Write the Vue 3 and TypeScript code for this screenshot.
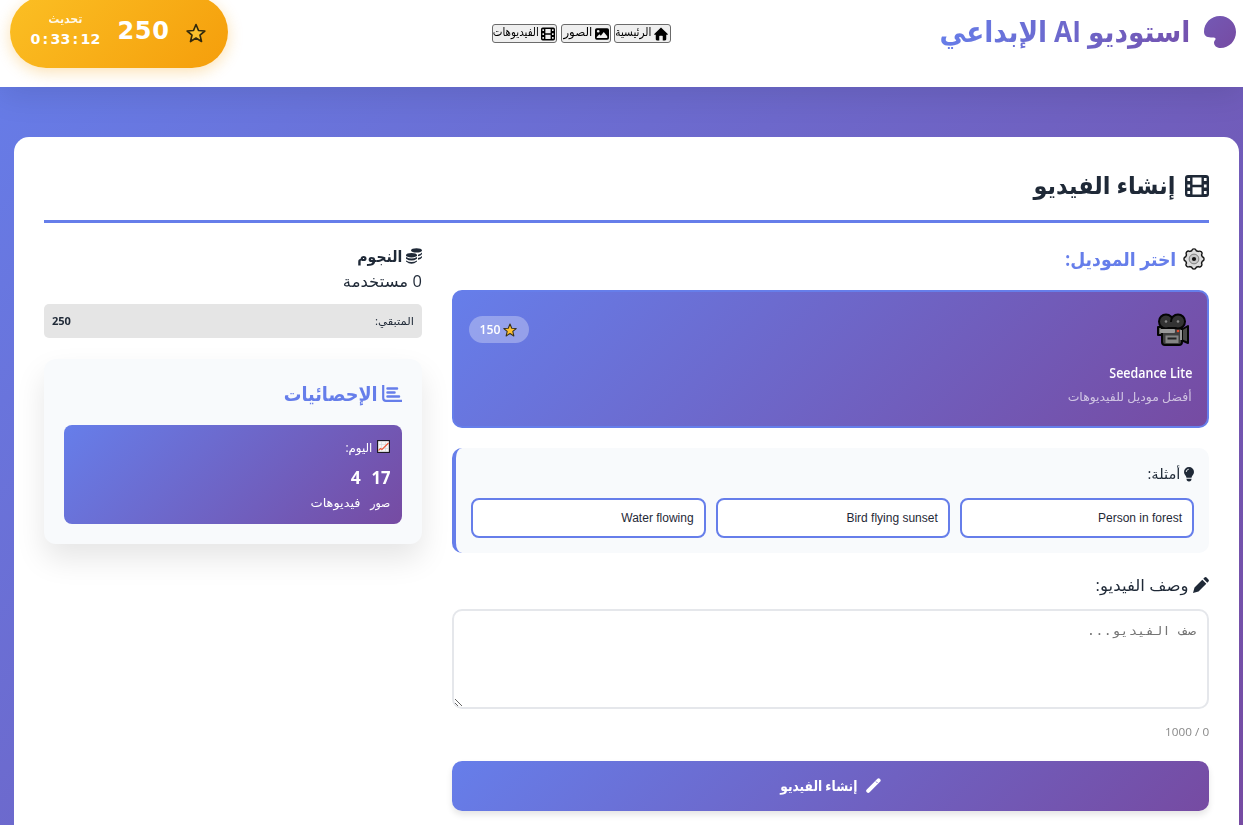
<script setup lang="ts">
import { defineComponent, h, nextTick, onMounted, ref } from 'vue'

// Keeps a label on a fixed measure, whichever Arabic face is available.
const FitText = defineComponent({
  props: { text: { type: String, required: true }, w: { type: Number, required: true } },
  setup(props) {
    const inner = ref<HTMLElement | null>(null)
    const scale = ref(1)
    onMounted(async () => {
      await nextTick()
      if (inner.value && inner.value.offsetWidth) {
        scale.value = props.w / inner.value.getBoundingClientRect().width
      }
    })
    return () =>
      h('span', { class: 'fit', style: { width: `${props.w}px` } }, [
        h('span', { ref: inner, class: 'fit-inner', style: { transform: `scaleX(${scale.value})` } }, props.text),
      ])
  },
})

const filmPath =
  'M3 1H21Q24 1 24 4V20Q24 23 21 23H3Q0 23 0 20V4Q0 1 3 1ZM7.5 3.4V10.8H16.5V3.4ZM7.5 13.2V20.6H16.5V13.2ZM2.4 4V7H5.1V4ZM2.4 10.5V13.5H5.1V10.5ZM2.4 17V20H5.1V17ZM18.9 4V7H21.6V4ZM18.9 10.5V13.5H21.6V10.5ZM18.9 17V20H21.6V17Z'
const starPath = 'M12 1.8L15 9L22.6 9.6L16.8 14.5L18.6 22.2L12 18L5.4 22.2L7.2 14.5L1.4 9.6L9 9Z'

const nav = [
  { label: 'الرئيسية', w: 36, icon: 'home' },
  { label: 'الصور', w: 29, icon: 'image' },
  { label: 'الفيديوهات', w: 46, icon: 'film' },
]
const examples = ['Person in forest', 'Bird flying sunset', 'Water flowing']
const prompt = ref('')
</script>

<template>
  <div class="page" dir="rtl">
    <header class="header">
      <div class="logo">
        <svg class="mark" viewBox="0 0 32 32">
          <defs>
            <linearGradient id="markFill" x1="0" y1="0" x2="1" y2="1">
              <stop offset="0" stop-color="#7459b5" /><stop offset="1" stop-color="#764ba2" />
            </linearGradient>
          </defs>
          <path fill="url(#markFill)" d="M16 0C25 0 32 7 32 16S25 32 16.500 32C12.500 32 10 29.500 10 26.500C10 24.500 12 23.700 11.500 22.400C11 21.300 9.500 21.500 7 21.500C2.500 21.500 0 19.500 0 15.800C0 7 7 0 16 0Z" />
        </svg>
        <FitText class="logo-text" text="استوديو AI الإبداعي" :w="251" />
      </div>
      <nav class="nav">
        <button v-for="n in nav" :key="n.label" :class="['nav-btn', n.icon]">
          <svg class="nav-icon" viewBox="0 0 24 24">
            <path v-if="n.icon === 'home'" d="M12 1L24 12.300Q23.500 13.500 21 13.300V21Q21 23 19 23H15V16Q15 15 14 15H10Q9 15 9 16V23H5Q3 23 3 21V13.300Q.5 13.500 0 12.300Z" />
            <path v-else-if="n.icon === 'image'" fill-rule="evenodd" d="M3 2H21Q24 2 24 5V19Q24 22 21 22H3Q0 22 0 19V5Q0 2 3 2ZM5.500 5A2.300 2.300 0 1 0 5.500 9.600A2.300 2.300 0 1 0 5.500 5ZM3 19H21V16L15 8.500L10 15L7.500 12.500L3 17Z" />
            <path v-else fill-rule="evenodd" :d="filmPath" />
          </svg>
          <FitText :text="n.label" :w="n.w" />
        </button>
      </nav>
      <div class="stars-pill">
        <svg class="pill-star" viewBox="0 0 24 24"><path :d="starPath" fill="#fbc02d" stroke="#33290c" stroke-width="2" stroke-linejoin="round" /></svg>
        <span class="pill-count">250</span>
        <span class="pill-timer">
          <FitText class="pill-label" text="تحديث" :w="34" />
          <span class="pill-time" dir="ltr">0<i>:</i>33<i>:</i>12</span>
        </span>
      </div>
    </header>

    <main class="card">
      <h2 class="title">
        <svg class="title-icon" viewBox="0 1 24 22" preserveAspectRatio="none"><path fill="#1f2937" fill-rule="evenodd" :d="filmPath" /></svg>
        <FitText text="إنشاء الفيديو" :w="142" />
      </h2>
      <div class="columns">
        <section class="main-col">
          <h3 class="section-title">
            <svg class="gear" viewBox="0 0 24 24">
              <path d="M9.500 3Q10 1 12 1T14.500 3L16.500 3.800Q18.500 2.800 20 4.200T20.200 7.500L21 9.500Q23 10 23 12T21 14.500L20.200 16.500Q21.200 18.500 19.800 20T16.500 20.200L14.500 21Q14 23 12 23T9.500 21L7.500 20.200Q5.500 21.200 4 19.800T3.800 16.500L3 14.500Q1 14 1 12T3 9.500L3.800 7.500Q2.800 5.500 4.200 4T7.500 3.800Z" fill="#dedede" stroke="#111" stroke-width="1.500" stroke-linejoin="round" />
              <circle cx="12" cy="12" r="5.300" fill="#c9c9c9" stroke="#777" stroke-width="1" />
              <circle cx="12" cy="12" r="2.300" fill="#111" />
            </svg>
            <FitText text="اختر الموديل:" :w="111" />
          </h3>

          <article class="model">
            <div class="model-info">
              <svg class="camera" viewBox="0 0 32 33">
                <g stroke="#050505" stroke-width="2" stroke-linejoin="round">
                  <path d="M24 17L31 13V30L24 27Z" fill="#4b4b4b" />
                  <rect x="1" y="14" width="5" height="8" fill="#666" />
                  <path d="M5 15H25V29Q25 32 22 32H8Q5 32 5 29Z" fill="#3f3f3f" />
                  <circle cx="9" cy="8.500" r="7" fill="#333" />
                  <circle cx="21" cy="8.500" r="7" fill="#333" />
                </g>
                <path d="M9 9H21V14H9Z" fill="#333" />
                <circle cx="9" cy="8.500" r="1.300" fill="#888" /><circle cx="21" cy="8.500" r="1.300" fill="#888" />
                <rect x="3" y="16" width="15" height="4" rx="1" fill="#999" />
                <circle cx="21" cy="18" r="1.300" fill="#e14b2b" />
                <rect x="8.500" y="22.500" width="13" height="7.500" fill="#858585" />
                <rect x="10.500" y="24.500" width="9" height="2" fill="#222" />
                <path d="M24 17V27" stroke="#999" stroke-width="2" />
              </svg>
              <FitText class="model-name" text="Seedance Lite" :w="83" />
              <FitText class="model-desc" text="أفضل موديل للفيديوهات" :w="124" />
            </div>
            <span class="price">
              <svg class="price-star" viewBox="0 0 24 24"><path :d="starPath" fill="#ffc02e" stroke="#35301f" stroke-width="1.800" stroke-linejoin="round" /></svg>
              <FitText text="150" :w="21" />
            </span>
          </article>

          <div class="examples">
            <div class="examples-title">
              <svg class="bulb" viewBox="0 0 10 15"><path fill="#1f2937" d="M5 0A5 5 0 0 1 10 5C10 7.500 7.800 8.500 7.500 10.800H2.500C2.200 8.500 0 7.500 0 5A5 5 0 0 1 5 0ZM2.500 11.800H7.500Q7.500 14.500 5 14.500Q2.500 14.500 2.500 11.800Z" /><path d="M2.200 5Q2.200 2.500 4.800 2.200" fill="none" stroke="#f8fafc" stroke-width=".9" /></svg>
              <FitText text="أمثلة:" :w="33" />
            </div>
            <div class="example-row">
              <button v-for="e in examples" :key="e" class="example">{{ e }}</button>
            </div>
          </div>

          <label class="prompt-label">
            <svg class="pencil" viewBox="0 0 16 16"><path fill="#1f2937" d="M9.300 2.700L13.300 6.700L5.500 14.500L0 16L1.500 10.500ZM10.300 1.700L11.500.5Q12.500-.4 13.600.6L15.400 2.400Q16.400 3.500 15.500 4.500L14.300 5.700Z" /></svg>
            <FitText text="وصف الفيديو:" :w="93" />
          </label>
          <div class="prompt-box">
            <textarea v-model="prompt" class="prompt" aria-label="وصف الفيديو" />
            <FitText v-if="!prompt" class="placeholder" text="صف الفيديو..." :w="109" />
          </div>
          <div class="counter"><FitText text="0 / 1000" :w="44" /></div>
          <button class="submit">
            <svg class="wand" viewBox="0 0 15 15"><path d="M2.200 12.800L12.600 2.400" stroke="#fff" stroke-width="4" stroke-linecap="round" /><path d="M10 3.500L11.500 5" stroke="#7567ca" stroke-width=".9" /></svg>
            <FitText class="submit-text" text="إنشاء الفيديو" :w="77" />
          </button>
        </section>

        <aside class="side">
          <div class="stars-title">
            <svg class="coins" viewBox="0 0 16 16">
              <g fill="#1f2937"><ellipse cx="10.500" cy="2.400" rx="5.500" ry="2.200" /><ellipse cx="5.500" cy="7.200" rx="5.500" ry="2.300" />
              <path d="M0 9Q5.500 12 11 9V10.700Q5.500 14.500 0 10.700ZM0 12.400Q5.500 15.500 11 12.400V13.500Q5.500 18 0 13.500ZM12 6.700Q15 6 16 4.500V6Q15 7.800 12 8.300ZM12 10Q15 9.300 16 8V9.500Q15 11.300 12 11.700Z" /></g>
            </svg>
            <FitText text="النجوم" :w="45" />
          </div>
          <div class="used"><FitText text="0 مستخدمة" :w="79" /></div>
          <div class="remaining">
            <FitText text="المتبقي:" :w="39" />
            <FitText class="strong" text="250" :w="19" />
          </div>
          <div class="stats">
            <h3 class="stats-title">
              <svg class="chart" viewBox="0 0 20 17"><path d="M1.200 0V13Q1.200 15.800 4 15.800H20" fill="none" stroke="#667eea" stroke-width="2.200" /><path d="M5.500 3.500H15M5.500 7.500H12.500M5.500 11.500H17" fill="none" stroke="#667eea" stroke-width="2.500" stroke-linecap="round" /></svg>
              <FitText text="الإحصائيات" :w="94" />
            </h3>
            <div class="today">
              <div class="today-title">
                <svg class="trend" viewBox="0 0 13 13"><rect x=".6" y=".6" width="11.800" height="11.800" fill="#f7f7f7" stroke="#16131d" stroke-width="1.100" /><path d="M4.500 1.500V11.500M8.500 1.500V11.500M1.500 4.500H11.500M1.500 8.500H11.500" stroke="#cfd6d8" stroke-width=".6" /><path d="M1.500 10.500L3.500 8.500L5 9.500L11.500 3" fill="none" stroke="#ef5b3c" stroke-width="1.100" /></svg>
                <FitText text="اليوم:" :w="27" />
              </div>
              <div class="figures">
                <div class="figure"><b><FitText text="17" :w="19" /></b><FitText text="صور" :w="20" /></div>
                <div class="figure"><b><FitText text="4" :w="10" /></b><FitText text="فيديوهات" :w="50" /></div>
              </div>
            </div>
          </div>
        </aside>
      </div>
    </main>
  </div>
</template>

<style>
html, body { margin: 0; overflow: hidden; }
.fit { display: inline-block; white-space: nowrap; flex: none; }
.fit-inner { display: inline-block; transform-origin: right center; }
</style>

<style scoped>
.page, .page * { box-sizing: border-box; }
.page {
  height: 825px; overflow: hidden;
  background: linear-gradient(135deg, #667eea 0%, #764ba2 100%);
  font-family: "Open Sans", "DejaVu Sans", sans-serif; color: #1f2937;
}
svg { flex: none; display: block; }
button { font-family: inherit; }
.header {
  position: relative; height: 87px; padding: 0 7px 23px 10px; background: #fff;
  box-shadow: 0 8px 32px rgba(0, 0, 0, .1);
  display: flex; align-items: center; justify-content: space-between;
}
.logo { display: flex; align-items: center; gap: 14px; width: 442px; height: 64px; }
.mark { width: 32px; height: 32px; }
.logo-text { font-size: 29px; font-weight: 700; line-height: 48px; height: 48px; margin-top: -2px; }
.logo-text :deep(.fit-inner) {
  background: linear-gradient(100deg, #667eea 0%, #7452ae 100%);
  -webkit-background-clip: text; background-clip: text; color: transparent;
}
.nav { display: flex; gap: 3.500px; flex: 1; height: 19px; padding-right: 123px; margin-top: 3px; }
.nav-btn {
  height: 19px; padding: 0 1px; display: flex; align-items: center; gap: 2px; flex: none;
  border: 1px solid #6b6b6b; border-radius: 3px; background: #efefef; color: #000;
  font: 12px/15px "Liberation Serif", "DejaVu Sans", serif; width: 57px;
}
.nav-btn .fit { margin-top: -2px; }
.nav-btn.image { width: 50px; }
.nav-btn.film { width: 65px; }
.nav-icon { width: 14px; height: 14px; }
.nav-btn.home .nav-icon { width: 16px; }
.stars-pill {
  width: 218px; height: 72px; border-radius: 36px; flex: none; color: #fff;
  display: flex; align-items: center; padding: 0 22px 0 20px; justify-content: space-between;
  background: linear-gradient(135deg, #fbbf24, #f59e0b);
  box-shadow: 0 4px 15px rgba(245, 158, 11, .3);
}
.pill-star { width: 20px; height: 20px; margin-top: 1px; }
.pill-count { font: 700 24px/40px "DejaVu Sans", sans-serif; letter-spacing: .6px; margin-bottom: 2px; }
.pill-timer { width: 71px; display: flex; flex-direction: column; align-items: center; margin-bottom: 4px; }
.pill-label { font-size: 12px; line-height: 18px; font-weight: 600; opacity: .9; }
.pill-time { font: 700 14.200px/22px "DejaVu Sans", sans-serif; letter-spacing: .15px; }
.pill-time i { font-style: normal; margin: 0 2.100px; }

.card { margin: 50px 4px 0 14px; height: 760px; padding: 30px; background: #fff; border-radius: 15px; }
.title {
  height: 56px; margin: 0 0 25px; border-bottom: 3px solid #667eea;
  display: flex; align-items: flex-start; gap: 10px; font-size: 24px; line-height: 36px; font-weight: 700;
}
.title-icon { width: 24px; height: 22px; margin-top: 8px; }
.columns { display: grid; grid-template-columns: 2fr 1fr; gap: 30px; }
.section-title { margin: -5px 0 15px; height: 32px; padding-right: 4px; display: flex; align-items: center; gap: 7px; font-size: 19px; color: #667eea; line-height: 32px; }
.gear { width: 22px; height: 22px; }
.model {
  height: 138px; border: 2px solid #667eea; border-radius: 10px; padding: 15px;
  background: linear-gradient(135deg, #667eea 0%, #764ba2 100%); color: #fff;
  display: flex; justify-content: space-between; align-items: flex-start;
}
.model-info { display: flex; flex-direction: column; align-items: flex-start; padding-top: 6px; }
.camera { width: 32px; height: 33px; margin-right: 3px; }
.model-name { font-size: 14px; font-weight: 600; line-height: 24px; margin-top: 15px; height: 25px; }
.model-desc { font-size: 12px; line-height: 22px; opacity: .65; }
.price { width: 60px; height: 27px; border-radius: 14px; margin-top: 9px; background: rgba(255, 255, 255, .3); display: flex; align-items: center; padding: 0 12px 0 10px; gap: 3px; font-size: 12px; font-weight: 600; }
.price-star { width: 14px; height: 14px; }
.examples { margin-top: 20px; height: 105px; border-left: 4px solid #667eea; border-radius: 10px; background: #f8fafc; padding: 15px; }
.examples-title { height: 25px; margin-bottom: 10px; display: flex; align-items: center; gap: 4px; font-size: 14px; line-height: 24px; }
.examples-title .fit { margin-top: -3px; }
.bulb { width: 10px; height: 15px; margin-top: -3px; }
.example-row { display: grid; grid-template-columns: repeat(3, 1fr); gap: 10px; }
.example { height: 40px; border: 2px solid #667eea; border-radius: 8px; background: #fff; padding: 0 10px; text-align: right; font: 12px "Liberation Sans", Arial, sans-serif; color: #1f2937; }
.prompt-label { margin-top: 20px; height: 26px; display: flex; align-items: center; gap: 4px; font-size: 16px; line-height: 26px; }
.prompt-label .fit { margin-top: -2px; }
.pencil { width: 16px; height: 16px; margin-top: -2px; }
.prompt-box { position: relative; height: 100px; margin-top: 10px; }
.prompt { display: block; width: 100%; height: 100px; margin: 0; padding: 12px; border: 2px solid #e5e7eb; border-radius: 10px; resize: vertical; outline: 0; }
.placeholder { position: absolute; right: 13px; top: 13px; font: 12px/20px "Liberation Mono", "DejaVu Sans Mono", monospace; color: #757575; pointer-events: none; }
.counter { margin-top: 12px; height: 22px; line-height: 22px; font-size: 11.500px; color: #888; }
.submit { margin-top: 18px; width: 100%; height: 50px; border: 0; border-radius: 10px; color: #fff; font-size: 14px; font-weight: 600; display: flex; align-items: center; justify-content: center; gap: 8px; background: linear-gradient(135deg, #667eea 0%, #764ba2 100%); box-shadow: 0 4px 6px rgba(0, 0, 0, .1); }
.submit-text { margin-top: -2px; }
.wand { width: 15px; height: 15px; margin-top: -1px; }

.stars-title { margin-top: -6px; height: 27px; display: flex; align-items: center; gap: 4px; font-size: 16px; font-weight: 700; line-height: 26px; }
.coins { width: 16px; height: 16px; }
.used { height: 26px; line-height: 24px; font-size: 16px; }
.remaining { margin-top: 9px; height: 34px; padding: 0 8px 2px; border-radius: 5px; background: #e5e5e5; display: flex; justify-content: space-between; align-items: center; font-size: 11px; }
.strong { font-weight: 700; }
.stats { margin-top: 21px; height: 185px; padding: 20px; border-radius: 12px; background: #f8fafc; box-shadow: 0 15px 30px rgba(0, 0, 0, .1); }
.stats-title { margin: 0; height: 46px; display: flex; align-items: flex-start; gap: 5px; font-size: 20px; line-height: 30px; color: #667eea; }
.chart { width: 20px; height: 17px; margin-top: 6px; }
.today { height: 99px; padding: 12px; border-radius: 8px; color: #fff; background: linear-gradient(135deg, #667eea 0%, #764ba2 100%); }
.today-title { height: 20px; display: flex; align-items: center; gap: 5px; font-size: 12px; }
.trend { width: 13px; height: 13px; margin-top: -1px; }
.figures { display: flex; gap: 10px; margin-top: 8px; }
.figure { display: flex; flex-direction: column; align-items: flex-start; font-size: 12px; line-height: 24px; }
.figure b { font-size: 17px; line-height: 26px; height: 26px; }
</style>
